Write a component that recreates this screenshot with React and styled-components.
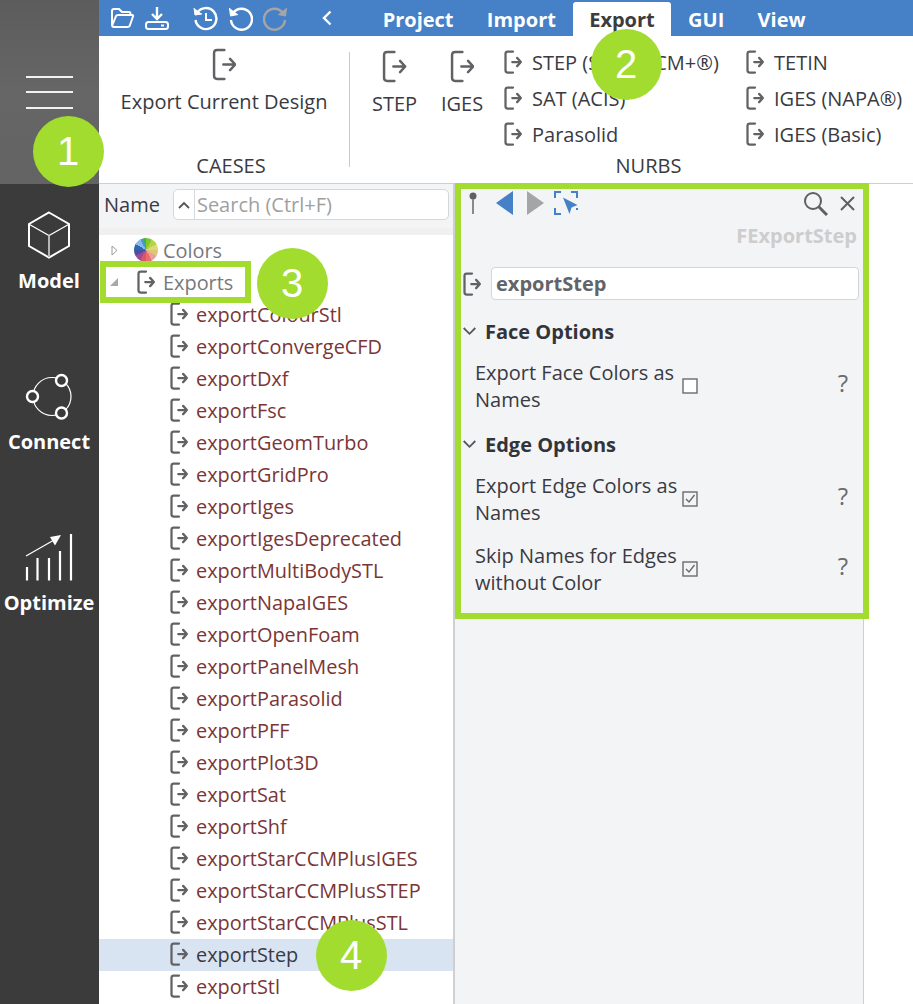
import React from "react";
import styled, { createGlobalStyle } from "styled-components";

const GREEN = "#a2dc2e";
const BLUE = "#4680c7";

const GlobalStyle = createGlobalStyle`
	html, body {
		margin: 0;
		padding: 0;
		background: #fff;
	}
	* {
		box-sizing: border-box;
	}
`;

const Page = styled.div`
	position: relative;
	width: 913px;
	height: 1004px;
	overflow: hidden;
	display: flex;
	font-family: "Open Sans", sans-serif;
	font-size: 20px;
	color: #3a3a42;
	background: #fff;
`;

const Sidebar = styled.aside`
	width: 99px;
	flex: none;
	display: flex;
	flex-direction: column;
	background: #3b3b3b;
`;

const MenuBlock = styled.div`
	height: 184px;
	background: linear-gradient(#5c5c5c, #666 50%, #636363);
	display: flex;
	flex-direction: column;
	align-items: center;
	gap: 13.5px;
	padding: 75.5px 1px 0 0;
`;

const MenuLine = styled.div`
	width: 47px;
	height: 2px;
	background: #f2f2f2;
`;

const NavItem = styled.div`
	height: 161px;
	display: flex;
	flex-direction: column;
	align-items: center;
	color: #fff;
	font-weight: 700;
	font-size: 20px;
	line-height: 27px;
	padding: 27px 1px 0 0;
	gap: 8px;
`;

const Main = styled.div`
	flex: 1;
	display: flex;
	flex-direction: column;
	min-width: 0;
`;

const TopBar = styled.div`
	height: 36px;
	background: ${BLUE};
	display: flex;
	align-items: center;
	padding-left: 11px;
`;

const ToolIcons = styled.div`
	display: flex;
	align-items: center;
	width: 256px;
	flex: none;
`;

const ToolIcon = styled.svg`
	display: block;
	flex: none;
	margin-right: ${({ $gap }) => $gap || 0}px;
`;

const Tabs = styled.div`
	display: flex;
	align-self: flex-end;
	height: 34px;
`;

const Tab = styled.div`
	height: 34px;
	padding: 0 16.65px;
	display: flex;
	align-items: center;
	font-weight: 700;
	font-size: 20px;
	border-radius: 3px 3px 0 0;
	color: ${({ $active }) => ($active ? "#3c3c3c" : "#fff")};
	background: ${({ $active }) => ($active ? "#fff" : "transparent")};
`;

const Ribbon = styled.div`
	height: 148px;
	display: flex;
	border-bottom: 1px solid #cfcfcf;
	background: #fff;
`;

const Group = styled.div`
	width: ${({ $w }) => $w}px;
	flex: none;
	display: flex;
	flex-direction: column;
	align-items: center;
`;

const GroupBody = styled.div`
	flex: 1 1 0;
	min-height: 0;
	width: 100%;
	display: flex;
`;

const GroupLabel = styled.div`
	height: 33px;
	line-height: 32px;
	font-size: 20px;
	padding-left: ${({ $shift }) => $shift}px;
`;

const BigButton = styled.div`
	display: flex;
	flex-direction: column;
	align-items: center;
	flex: none;
	width: ${({ $w }) => $w}px;
	margin: ${({ $center }) => ($center ? "0 auto" : "0")};
	padding-top: ${({ $top }) => $top}px;
	gap: ${({ $gap }) => $gap}px;
	line-height: 27px;
	white-space: nowrap;
`;

const Separator = styled.div`
	width: 1px;
	flex: none;
	background: #c9c9c9;
	margin: 16px 0;
`;

const SmallColumn = styled.div`
	display: flex;
	flex-direction: column;
	width: ${({ $w }) => $w}px;
	flex: none;
	padding: 8px 0 0 ${({ $pad }) => $pad || 0}px;
`;

const SmallButton = styled.div`
	height: 36px;
	flex: none;
	display: flex;
	align-items: center;
	gap: 10px;
	white-space: nowrap;
`;

const Lower = styled.div`
	flex: 1;
	min-height: 0;
	display: flex;
`;

const TreePanel = styled.div`
	width: 354px;
	flex: none;
`;

const TreeHeader = styled.div`
	height: 51px;
	background: #f3f4f6;
	display: flex;
	align-items: center;
	padding: 0 4px 3px 5px;
	gap: 13px;
	border-bottom: 7px solid #f0f0f0;
`;

const SearchBox = styled.div`
	flex: 1;
	height: 31px;
	background: #fff;
	border: 1px solid #d5d7db;
	border-radius: 5px;
	display: flex;
	align-items: center;
	color: #a0a0a0;
`;

const SortCell = styled.div`
	width: 21px;
	height: 100%;
	border-right: 1px solid #d5d7db;
	display: flex;
	align-items: center;
	justify-content: center;
	flex: none;
	margin-right: 2px;
`;

const TreeRow = styled.div`
	height: 32px;
	display: flex;
	align-items: center;
	font-size: 19.9px;
	padding: 0 0 2px ${({ $indent }) => $indent}px;
	background: ${({ $selected }) => ($selected ? "#d9e4f2" : "transparent")};
	color: ${({ $dim, $selected }) => ($dim ? "#77787e" : $selected ? "#3a3a42" : "#7b3535")};
	white-space: nowrap;
`;

const ColorWheel = styled.span`
	width: 24px;
	height: 24px;
	flex: none;
	margin-right: 5px;
	border-radius: 50%;
	background: conic-gradient(
		#7fc92b 0 30deg,
		#b4d24a 30deg 60deg,
		#dcdc6e 60deg 90deg,
		#e0c47c 90deg 120deg,
		#e8a09a 120deg 150deg,
		#ec6c6c 150deg 180deg,
		#d8566c 180deg 210deg,
		#9a4b9a 210deg 240deg,
		#4a4fa0 240deg 270deg,
		#2a6ab5 270deg 300deg,
		#8ab8e8 300deg 330deg,
		#4a9ad8 330deg 345deg,
		#3fae5a 345deg 360deg
	);
`;

const Inspector = styled.div`
	width: 411px;
	flex: none;
	border-left: 2px solid #cfcfcf;
	border-right: 1px solid #cfcfcf;
	background: #f3f4f6;
	padding: 4px 4px 0 8px;
`;

const InspectorTools = styled.div`
	height: 30px;
	display: flex;
	align-items: center;
	padding-left: 5px;
`;

const Spacer = styled.div`
	flex: 1;
`;

const TypeName = styled.div`
	text-align: right;
	font-weight: 700;
	color: #cdcdcd;
	line-height: 27px;
	padding-right: 2px;
	margin: 4px 0 18px;
`;

const NameRow = styled.div`
	display: flex;
	align-items: center;
	gap: 10px;
	height: 33px;
	margin-bottom: 15px;
`;

const NameField = styled.div`
	flex: 1;
	height: 33px;
	background: #fff;
	border: 1px solid #d3d5d9;
	border-radius: 4px;
	padding-left: 4px;
	display: flex;
	align-items: center;
	font-weight: 700;
	color: #63646a;
`;

const SectionTitle = styled.div`
	height: 32px;
	margin-top: ${({ $top }) => $top || 0}px;
	display: flex;
	align-items: center;
	gap: 9px;
	font-weight: 700;
	color: #33343a;
`;

const OptionRow = styled.div`
	display: grid;
	grid-template-columns: 207px 20px 1fr 12px;
	align-items: center;
	height: 70px;
	margin-top: 3.5px;
	padding: 0 11px 0 12px;
	line-height: 27px;
`;

const SkipRow = styled(OptionRow)`
	margin-top: 0;
`;

const OptionLabel = styled.div`
	white-space: pre-line;
`;

const Help = styled.div`
	color: #6c6c6c;
	font-size: 24px;
	text-align: right;
	margin: -3px 0 4px;
`;

const Callout = styled.div`
	position: absolute;
	left: ${({ $x }) => $x - 35.5}px;
	top: ${({ $y }) => $y - 35.5}px;
	width: 71px;
	height: 71px;
	border-radius: 50%;
	background: ${GREEN};
	color: #fff;
	font-family: "Liberation Sans", Arial, sans-serif;
	font-size: 40px;
	display: flex;
	align-items: center;
	justify-content: center;
`;

const Frame = styled.div`
	position: absolute;
	left: ${({ $x }) => $x}px;
	top: ${({ $y }) => $y}px;
	width: ${({ $w }) => $w}px;
	height: ${({ $h }) => $h}px;
	border: ${({ $t }) => $t}px solid ${GREEN};
`;

const ExportIcon = ({ h = 24, gap = 0, color = "#626266" }) => (
	<ToolIcon $gap={gap} width={(h * 24) / 32} height={h} viewBox="0 0 24 32" fill="none" stroke={color} strokeWidth={h > 30 ? 2.4 : 3}>
		<path d="M12 2 H5 Q2 2 2 5 V27 Q2 30 5 30 H12" strokeLinecap="round" />
		<path d="M11 16 H22.5 M17.5 10.5 L22.5 16 L17.5 21.5" strokeLinecap="round" strokeLinejoin="round" />
	</ToolIcon>
);

const Chevron = () => (
	<ToolIcon width="13" height="13" viewBox="0 0 13 13" fill="none" stroke="#55565a" strokeWidth="1.8">
		<path d="M0.7 3 L6.5 8.8 L12.3 3" />
	</ToolIcon>
);

const CheckBox = ({ checked }) => (
	<ToolIcon width="16" height="16" viewBox="0 0 16 16" fill="none">
		<rect x="1" y="1" width="14" height="14" stroke="#6b6b6b" strokeWidth="1.4" fill={checked ? "none" : "#fff"} />
		{checked && <path d="M4 8 L7 11 L12.5 4" stroke="#6b6b6b" strokeWidth="1.4" />}
	</ToolIcon>
);

const TopIcons = () => (
	<ToolIcons>
		<ToolIcon $gap={11} width="24" height="24" viewBox="0 0 24 24" fill="none" stroke="#fff" strokeWidth="2" strokeLinejoin="round">
			<path d="M2 19 V5 Q2 3 4 3 H9 L12 6 H19 Q20.5 6 20.5 8 V9" />
			<path d="M2 20 L6 10 Q6.5 9 8 9 H22 Q23.5 9 23 10.5 L20 19 Q19.5 21 17.5 21 H4 Q2 21 2 19" />
		</ToolIcon>
		<ToolIcon $gap={24} width="24" height="24" viewBox="0 0 24 24" fill="none" stroke="#fff" strokeWidth="2">
			<rect x="1" y="16" width="22" height="7" rx="2.5" />
			<path d="M12 1 V12 M7 8 L12 13 L17 8" strokeWidth="2.4" />
			<path d="M16 19.5 H19" />
		</ToolIcon>
		<ToolIcon $gap={10} width="25" height="25" viewBox="0 0 25 25" fill="none" stroke="#fff" strokeWidth="2.4">
			<path d="M4 7 A10.5 10.5 0 1 1 2.5 14" />
			<path d="M1 2 L2 9 L9 8" fill="#fff" strokeWidth="1" />
			<path d="M13 7 V14 H19" strokeWidth="2" />
		</ToolIcon>
		<ToolIcon $gap={10} width="25" height="25" viewBox="0 0 25 25" fill="none" stroke="#fff" strokeWidth="2.4">
			<path d="M5 7 A10.5 10.5 0 1 1 3 14" />
			<path d="M1.5 2 L2.5 10 L10 8.5" fill="#fff" strokeWidth="1" />
		</ToolIcon>
		<ToolIcon $gap={33} width="25" height="25" viewBox="0 0 25 25" fill="none" stroke="#a5a5a5" strokeWidth="2.4">
			<path d="M20 7 A10.5 10.5 0 1 0 22 14" />
			<path d="M23.5 2 L22.5 10 L15 8.5" fill="#a5a5a5" strokeWidth="1" />
		</ToolIcon>
		<ToolIcon width="12" height="16" viewBox="0 0 12 16" fill="none" stroke="#fff" strokeWidth="2.4">
			<path d="M9.5 1.5 L3 8 L9.5 14.5" />
		</ToolIcon>
	</ToolIcons>
);

const modelIcon = (
	<svg width="44" height="48" viewBox="0 0 44 48" fill="none" stroke="#fff" strokeWidth="2">
		<path d="M22 1.5 L42 13 V35 L22 46.5 L2 35 V13 Z" />
		<path d="M2.5 13.5 L22 24.5 L41.5 13.5" strokeWidth="1.2" />
		<path d="M22 24.5 V46" stroke="#b5b5b5" />
	</svg>
);

const connectIcon = (
	<svg width="48" height="48" viewBox="0 0 48 48" fill="none" stroke="#fff">
		<circle cx="27" cy="24.5" r="19" strokeWidth="1.2" />
		<circle cx="36.5" cy="8.5" r="5.5" fill="#3b3b3b" strokeWidth="2.4" />
		<circle cx="7.5" cy="24.5" r="5.5" fill="#3b3b3b" strokeWidth="2.4" />
		<circle cx="36.5" cy="41" r="5.5" fill="#3b3b3b" strokeWidth="2.4" />
	</svg>
);

const optimizeIcon = (
	<svg width="50" height="48" viewBox="0 0 50 48" fill="none" stroke="#fff" strokeWidth="2.2">
		<path d="M3 47.5 V34 M13.5 47.5 V25 M25 47.5 V25 M36 47.5 V18 M47 47.5 V1" />
		<path d="M2 23 L30 7" strokeWidth="1.2" />
		<path d="M37 2 L26 4 L31 12.5 Z" fill="#fff" stroke="none" />
	</svg>
);

const treeItems = [
	"exportColourStl",
	"exportConvergeCFD",
	"exportDxf",
	"exportFsc",
	"exportGeomTurbo",
	"exportGridPro",
	"exportIges",
	"exportIgesDeprecated",
	"exportMultiBodySTL",
	"exportNapaIGES",
	"exportOpenFoam",
	"exportPanelMesh",
	"exportParasolid",
	"exportPFF",
	"exportPlot3D",
	"exportSat",
	"exportShf",
	"exportStarCCMPlusIGES",
	"exportStarCCMPlusSTEP",
	"exportStarCCMPlusSTL",
	"exportStep",
	"exportStl",
];

const App = () => (
	<Page>
		<GlobalStyle />
		<Sidebar>
			<MenuBlock>
				<MenuLine />
				<MenuLine />
				<MenuLine />
			</MenuBlock>
			<NavItem>
				{modelIcon}
				<span>Model</span>
			</NavItem>
			<NavItem>
				{connectIcon}
				<span>Connect</span>
			</NavItem>
			<NavItem>
				{optimizeIcon}
				<span>Optimize</span>
			</NavItem>
		</Sidebar>
		<Main>
			<TopBar>
				<TopIcons />
				<Tabs>
					<Tab>Project</Tab>
					<Tab>Import</Tab>
					<Tab $active>Export</Tab>
					<Tab>GUI</Tab>
					<Tab>View</Tab>
				</Tabs>
			</TopBar>
			<Ribbon>
				<Group $w={250}>
					<GroupBody>
						<BigButton $center $w={220} $top={12} $gap={7}>
							<ExportIcon h={33} />
							Export Current Design
						</BigButton>
					</GroupBody>
					<GroupLabel $shift={14}>CAESES</GroupLabel>
				</Group>
				<Separator />
				<Group $w={563}>
					<GroupBody>
						<BigButton $w={89} $top={14} $gap={7}>
							<ExportIcon h={33} />
							STEP
						</BigButton>
						<BigButton $w={46} $top={14} $gap={7}>
							<ExportIcon h={33} />
							IGES
						</BigButton>
						<SmallColumn $w={261} $pad={19}>
							<SmallButton><ExportIcon />STEP (STAR-CCM+®)</SmallButton>
							<SmallButton><ExportIcon />SAT (ACIS)</SmallButton>
							<SmallButton><ExportIcon />Parasolid</SmallButton>
						</SmallColumn>
						<SmallColumn $w={167}>
							<SmallButton><ExportIcon />TETIN</SmallButton>
							<SmallButton><ExportIcon />IGES (NAPA®)</SmallButton>
							<SmallButton><ExportIcon />IGES (Basic)</SmallButton>
						</SmallColumn>
					</GroupBody>
					<GroupLabel $shift={34}>NURBS</GroupLabel>
				</Group>
			</Ribbon>
			<Lower>
				<TreePanel>
					<TreeHeader>
						Name
						<SearchBox>
							<SortCell>
								<ToolIcon width="12" height="8" viewBox="0 0 12 8" fill="none" stroke="#55565a" strokeWidth="1.8">
									<path d="M1 7 L6 2 L11 7" />
								</ToolIcon>
							</SortCell>
							Search (Ctrl+F)
						</SearchBox>
					</TreeHeader>
					<TreeRow $indent={12} $dim>
						<ToolIcon $gap={16} width="7" height="11" viewBox="0 0 7 11" fill="none" stroke="#9a9a9a">
							<path d="M1 1 L6 5.5 L1 10 Z" />
						</ToolIcon>
						<ColorWheel />
						Colors
					</TreeRow>
					<TreeRow $indent={11} $dim>
						<ToolIcon $gap={19} width="8" height="8" viewBox="0 0 8 8" fill="#a8a8a8">
							<path d="M8 0 V8 H0 Z" />
						</ToolIcon>
						<ExportIcon gap={8} />
						Exports
					</TreeRow>
					{treeItems.map((name) => (
						<TreeRow key={name} $indent={71} $selected={name === "exportStep"}>
							<ExportIcon gap={8} />
							{name}
						</TreeRow>
					))}
				</TreePanel>
				<Inspector>
					<InspectorTools>
						<ToolIcon $gap={18} width="10" height="24" viewBox="0 0 10 24">
							<circle cx="5" cy="5" r="3.5" fill="#606060" />
							<path d="M5 8 V23" stroke="#8a8a8a" strokeWidth="2" />
						</ToolIcon>
						<ToolIcon $gap={14} width="17" height="24" viewBox="0 0 17 24"><path d="M17 0 V24 L0 12 Z" fill={BLUE} /></ToolIcon>
						<ToolIcon $gap={10} width="17" height="24" viewBox="0 0 17 24"><path d="M0 0 V24 L17 12 Z" fill="#a5a5a5" /></ToolIcon>
						<ToolIcon width="24" height="24" viewBox="0 0 24 24" fill="none" stroke={BLUE} strokeWidth="2">
							<path d="M1 7 V1 H7 M17 1 H23 V7 M1 17 V23 H7 M23 17 V19" />
							<path d="M9 6.5 L23.5 14 L17.5 16.5 L15.5 23 Z" fill={BLUE} stroke="none" />
						</ToolIcon>
						<Spacer />
						<ToolIcon $gap={12} width="25" height="25" viewBox="0 0 25 25" fill="none" stroke="#606060">
							<circle cx="10" cy="10" r="8" strokeWidth="2" />
							<path d="M15.5 15.5 L24 24" strokeWidth="3" />
						</ToolIcon>
						<ToolIcon $gap={4} width="15" height="15" viewBox="0 0 15 15" fill="none" stroke="#606060" strokeWidth="2">
							<path d="M1 1 L14 14 M14 1 L1 14" />
						</ToolIcon>
					</InspectorTools>
					<TypeName>FExportStep</TypeName>
					<NameRow>
						<ExportIcon />
						<NameField>exportStep</NameField>
					</NameRow>
					<SectionTitle>
						<Chevron />
						Face Options
					</SectionTitle>
					<OptionRow>
						<OptionLabel>{"Export Face Colors as\nNames"}</OptionLabel>
						<CheckBox />
						<span />
						<Help>?</Help>
					</OptionRow>
					<SectionTitle $top={7.5}>
						<Chevron />
						Edge Options
					</SectionTitle>
					<OptionRow>
						<OptionLabel>{"Export Edge Colors as\nNames"}</OptionLabel>
						<CheckBox checked />
						<span />
						<Help>?</Help>
					</OptionRow>
					<SkipRow>
						<OptionLabel>{"Skip Names for Edges\nwithout Color"}</OptionLabel>
						<CheckBox checked />
						<span />
						<Help>?</Help>
					</SkipRow>
				</Inspector>
			</Lower>
		</Main>
		<Frame $x={100} $y={261} $w={151} $h={42} $t={6} />
		<Frame $x={455} $y={183} $w={414} $h={436} $t={6} />
		<Callout $x={68} $y={151}>1</Callout>
		<Callout $x={626} $y={64}>2</Callout>
		<Callout $x={292} $y={283}>3</Callout>
		<Callout $x={351} $y={955}>4</Callout>
	</Page>
);

export default App;
